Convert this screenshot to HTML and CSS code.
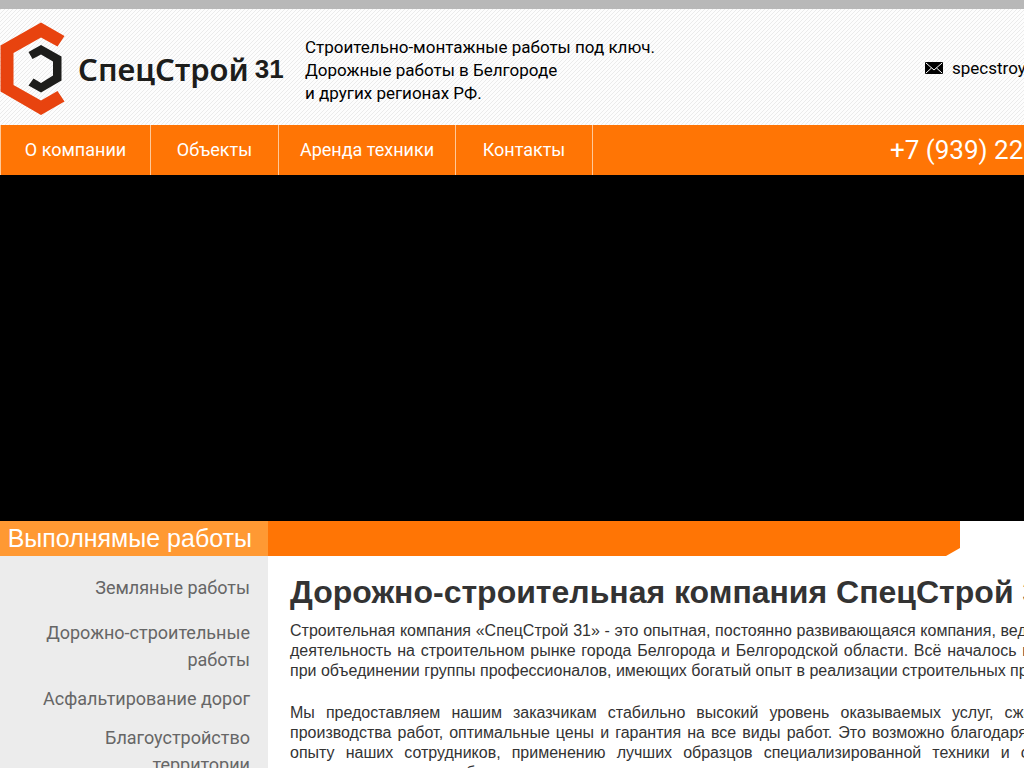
FILE: index.html
```html
<!DOCTYPE html>
<html lang="ru">
<head>
<meta charset="utf-8">
<title>СпецСтрой 31</title>
<link rel="stylesheet" href="styles.css">
</head>
<body>
<div class="page">
  <header class="header">
    <a class="logo" href="#">
      <svg class="logo-mark" width="66" height="94" viewBox="0 0 66 94" aria-hidden="true">
        <path fill="#e8430f" d="M41 .5 64.500 14 57.500 24.500 41 15.500 13.500 31V63L41 78.500 57.500 69 64.500 79.500 41 93 .5 69.500V23.500Z"/>
        <path fill="#1d1d1b" d="M41 23 61.500 34.500V58.500L41 70.500 28.500 63.500 33.500 56.500 41 61 53 53.500V39.500L41 32.500 32.500 37 28.500 30Z"/>
      </svg>
      <span class="logo-name">СпецСтрой</span>
      <span class="logo-number">31</span>
    </a>
    <p class="slogan">Строительно-монтажные работы под ключ.<br>Дорожные работы в Белгороде<br>и других регионах РФ.</p>
    <a class="mail" href="#">
      <svg width="18" height="12" viewBox="0 0 18 12" aria-hidden="true">
        <rect width="18" height="12" rx="1" fill="#000"/>
        <path d="M1 1 9 8 17 1M1 11 6.500 6M17 11 11.500 6" fill="none" stroke="#fff" stroke-width="1"/>
      </svg>
      specstroy
    </a>
  </header>
  <nav class="nav">
    <a class="about" href="#">О компании</a>
    <a class="objects" href="#">Объекты</a>
    <a class="rent" href="#">Аренда техники</a>
    <a class="contacts" href="#">Контакты</a>
    <a class="phone" href="#">+7 (939) 22</a>
  </nav>
  <div class="slider"></div>
  <div class="columns">
    <aside class="sidebar">
      <h2 class="sidebar-title">Выполнямые работы</h2>
      <ul class="works">
        <li class="first"><a href="#">Земляные работы</a></li>
        <li><a href="#">Дорожно-строительные работы</a></li>
        <li><a href="#">Асфальтирование дорог</a></li>
        <li><a href="#">Благоустройство территории</a></li>
      </ul>
    </aside>
    <main class="main">
      <div class="strip"></div>
      <article class="article">
        <h1>Дорожно-строительная компания СпецСтрой 31</h1>
        <p>Строительная компания «СпецСтрой 31» - это опытная, постоянно развивающаяся компания, ведущая свою коммерческую деятельность на строительном рынке города Белгорода и Белгородской области. Всё началось в позапрошлом 2010 году, при&nbsp;объединении группы профессионалов, имеющих богатый опыт в реализации строительных проектов.</p>
        <p>Мы предоставляем нашим заказчикам стабильно высокий уровень оказываемых услуг, сжатые оговорённые сроки производства&nbsp;работ, оптимальные цены и гарантия на все виды работ. Это возможно благодаря большому многолетнему опыту наших сотрудников, применению лучших образцов специализированной техники и современных технологий, а&nbsp;также&nbsp;материалов в области строительства.</p>
      </article>
    </main>
  </div>
</div>
</body>
</html>
```

FILE: styles.css
```css
* { box-sizing: border-box; }
html { overflow: hidden; }
body { margin: 0; background: #fff; color: #333; font-family: Roboto, "Liberation Sans", sans-serif; }
a { color: inherit; text-decoration: none; }
.page { min-width: 1220px; }

.header {
  display: flex;
  align-items: center;
  min-height: 125px;
  border-top: 9px solid #b8b8b8;
  background: linear-gradient(135deg, #ebebeb 12.5%, #fdfdfd 12.5% 50%, #ebebeb 50% 62.5%, #fdfdfd 62.5%) 0 0 / 4px 4px;
  color: #000;
}
.logo { display: flex; align-items: center; width: 305px; padding-top: 3px; color: #1d1d1b; white-space: nowrap; }
.logo-mark { margin-right: 12px; }
.logo-name { font: 600 31px/40px "Noto Sans", sans-serif; }
.logo-number { margin-left: 6px; font: bold 26px/40px "Liberation Sans", sans-serif; }
.slogan { margin: 0; font-size: 17px; line-height: 23px; padding-top: 7px; }
.mail { display: flex; align-items: center; gap: 9px; width: 295px; margin-left: auto; font-size: 17px; line-height: 20px; padding-top: 2px; }

.nav { display: flex; min-height: 50px; background: #ff7505; color: #fff; font-size: 18px; line-height: 50px; text-align: center; border-left: 1px solid #ffc999; }
.nav a { border-right: 1px solid #ffc999; }
.nav .about { width: 150px; }
.nav .objects { width: 128px; }
.nav .rent { width: 177px; }
.nav .contacts { width: 137px; }
.nav .phone { width: 330px; margin-left: auto; border: 0; font-size: 26px; text-align: left; }

.slider { height: 346px; background: #000; }

.columns { display: flex; min-height: 260px; }
.sidebar { flex: 0 0 268px; background: #ececec; }
.sidebar-title { margin: 0; padding-right: 16px; background: #ff9933; color: #fff; font: 25px/35px "Liberation Sans", sans-serif; text-align: right; white-space: nowrap; }
.works { margin: 0; padding: 18px 18px 0 30px; list-style: none; color: #666; font-size: 18px; line-height: 27px; text-align: right; }
.works li { margin-bottom: 12px; }
.works .first { margin-bottom: 18px; }

.main { flex: 1; }
.strip { width: 692px; height: 35px; background: #ff7505; clip-path: polygon(0 0, 100% 0, 100% 27px, calc(100% - 14px) 100%, 0 100%); }
.article { padding: 17px 0 0 22px; font: 16px/20px "Liberation Sans", sans-serif; text-align: justify; }
.article h1 { margin: 0 0 10px; font-size: 32px; line-height: 38px; white-space: nowrap; }
.article p { margin: 0 0 22px; }
```
